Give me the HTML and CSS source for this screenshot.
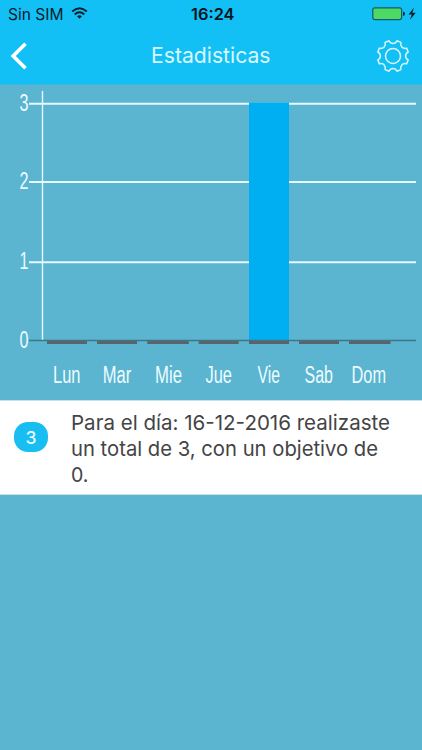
FILE: index.html
```html
<!DOCTYPE html>
<html lang="es">
<head>
<meta charset="utf-8">
<title>Estadisticas</title>
<link rel="stylesheet" href="styles.css">
</head>
<body>
<header class="top">
  <div class="status">
    <div class="carrier">
      <svg class="carrier-text" width="56" height="28"><text x="0" y="19.500" textLength="55.5" lengthAdjust="spacingAndGlyphs">Sin SIM</text></svg>
      <svg class="wifi" width="17" height="12" viewBox="0 0 16 12" fill="none" stroke="#06212b" stroke-width="2"><path d="M.7 4.500Q8-2 15.300 4.500M3.200 7.400Q8 3.200 12.800 7.400"/><path d="M8 11.800 5.500 9.200Q8 7.200 10.500 9.200Z" fill="#06212b" stroke="none"/></svg>
    </div>
    <svg class="clock" width="46" height="28"><text x="1" y="19.500" textLength="43.500" lengthAdjust="spacingAndGlyphs">16:24</text></svg>
    <svg class="battery" width="46" height="14" viewBox="0 0 46 14"><rect x=".8" y=".8" width="28.800" height="11.800" rx="2" fill="#4cd964" stroke="#12596b" stroke-width="1.200"/><path d="M31 4.500q2 .3 2 2.300t-2 2.300z" fill="#0b2a36"/><path d="M42 .5 36.500 7.500h3.300L38 12.800l5.700-7h-3.400z" fill="#06212b"/></svg>
  </div>
  <nav class="bar">
    <svg class="back" width="18" height="30" viewBox="0 0 18 30" fill="none" stroke="#fff" stroke-width="3.700"><path d="M15.500 2.800 3.200 15l12.300 12.200"/></svg>
    <svg class="title" width="124" height="32"><text x="2" y="23.300" textLength="119.500" lengthAdjust="spacingAndGlyphs">Estadisticas</text></svg>
    <svg class="gear" width="34" height="34" viewBox="-17 -17 34 34" fill="none" stroke="#d8f6ff" stroke-width="1.500" stroke-linejoin="round"><circle r="7.500"/><path id="gear-edge" d="M0-12.600C2.400-12.600 3.200-13.600 4-15.200L7.900-13.600C7.300-11.800 7.300-10.600 8.900-8.900C10.600-7.300 11.800-7.300 13.600-7.900L15.200-4C13.600-3.200 12.600-2.400 12.600 0C12.600 2.400 13.600 3.200 15.200 4L13.600 7.900C11.800 7.300 10.600 7.300 8.900 8.900C7.300 10.600 7.300 11.800 7.900 13.600L4 15.200C3.200 13.600 2.400 12.600 0 12.600C-2.400 12.600-3.200 13.600-4 15.200L-7.900 13.600C-7.300 11.800-7.300 10.600-8.900 8.900C-10.600 7.300-11.800 7.300-13.600 7.900L-15.200 4C-13.600 3.200-12.600 2.400-12.600 0C-12.600-2.400-13.600-3.200-15.200-4L-13.600-7.900C-11.800-7.300-10.600-7.300-8.900-8.900C-7.300-10.600-7.300-11.800-7.900-13.600L-4-15.200C-3.200-13.600-2.400-12.600 0-12.600Z"/></svg>
  </nav>
</header>
<main>
  <svg class="chart" width="422" height="315" viewBox="0 85 422 315">
    <g class="grid"><path d="M29 103.700H416M29 182.100H416M29 262.200H416"/><path class="axis" d="M42.500 91V340"/></g>
    <rect x="249" y="102.500" width="40" height="238" fill="#00aef2"/>
    <g fill="#5e6268"><rect x="47" y="340" width="40" height="4"/><rect x="97" y="340" width="40" height="4"/><rect x="147.300" y="340" width="41.500" height="4"/><rect x="198.700" y="340" width="40" height="4"/><rect x="249" y="340" width="40" height="4"/><rect x="299" y="340" width="40" height="4"/><rect x="349" y="340" width="41.500" height="4"/></g>
    <path d="M29 340.600H416" stroke="#3d7785" stroke-width="1.500"/>
    <g class="labels">
      <text x="19.500" y="110.700" textLength="9" lengthAdjust="spacingAndGlyphs">3</text>
      <text x="19.500" y="189.200" textLength="9" lengthAdjust="spacingAndGlyphs">2</text>
      <text x="19.500" y="269.300" textLength="9" lengthAdjust="spacingAndGlyphs">1</text>
      <text x="19.500" y="347.700" textLength="9" lengthAdjust="spacingAndGlyphs">0</text>
      <text x="53" y="383" textLength="27.500" lengthAdjust="spacingAndGlyphs">Lun</text>
      <text x="102.700" y="383" textLength="28.500" lengthAdjust="spacingAndGlyphs">Mar</text>
      <text x="155" y="383" textLength="27" lengthAdjust="spacingAndGlyphs">Mie</text>
      <text x="205.500" y="383" textLength="26.500" lengthAdjust="spacingAndGlyphs">Jue</text>
      <text x="257.500" y="383" textLength="22.500" lengthAdjust="spacingAndGlyphs">Vie</text>
      <text x="304.500" y="383" textLength="28.500" lengthAdjust="spacingAndGlyphs">Sab</text>
      <text x="351.500" y="383" textLength="34.500" lengthAdjust="spacingAndGlyphs">Dom</text>
    </g>
  </svg>
  <section class="row">
    <div class="badge">3</div>
    <svg class="message" width="330" height="94">
      <text x="0" y="28.500" textLength="319" lengthAdjust="spacingAndGlyphs">Para el día: 16-12-2016 realizaste</text>
      <text x="0" y="54.500" textLength="307" lengthAdjust="spacingAndGlyphs">un total de 3, con un objetivo de</text>
      <text x="0" y="80.500" textLength="17.500" lengthAdjust="spacingAndGlyphs">0.</text>
    </svg>
  </section>
</main>
</body>
</html>
```

FILE: styles.css
```css
* { box-sizing: border-box; }
body { margin: 0; width: 422px; height: 750px; overflow: hidden; background: #5bb5d0; font-family: Inter, "Liberation Sans", sans-serif; }
svg { display: block; flex: none; }
.top { height: 85px; background: #13c0f5; border-bottom: 1px solid #39bbe2; }
.status { height: 28px; display: grid; grid-template-columns: 1fr 46px 1fr; align-items: center; font-size: 15.5px; fill: #06212b; }
.carrier { display: flex; align-items: center; gap: 7px; padding-left: 8px; }
.wifi { margin-top: -2px; }
.clock { font-weight: 600; fill: #03151c; margin-left: 2px; }
.battery { justify-self: end; margin-right: 4px; }
.bar { height: 56px; display: grid; grid-template-columns: 1fr 124px 1fr; align-items: center; }
.back { margin-left: 10px; }
.title { font-size: 21.5px; fill: #d8f6ff; }
.gear { justify-self: end; margin-right: 12px; }
.grid { stroke: #e6fbff; stroke-width: 2; }
.axis { stroke-width: 1.4; }
.labels { font-family: "Liberation Sans", sans-serif; font-size: 23.5px; fill: #ecfcff; }
.row { height: 95px; display: flex; align-items: center; background: #fff; border-top: 1px solid #c5e0e9; border-bottom: 1px solid #c5e0e9; padding-left: 14px; }
.badge { width: 34px; height: 30px; border-radius: 14px; background: #18bef2; color: #e6faff; display: flex; align-items: center; justify-content: center; font-size: 17.5px; font-weight: 500; margin: -21px 23px 0 0; }
.message { font-size: 20.5px; fill: #444446; }
```
